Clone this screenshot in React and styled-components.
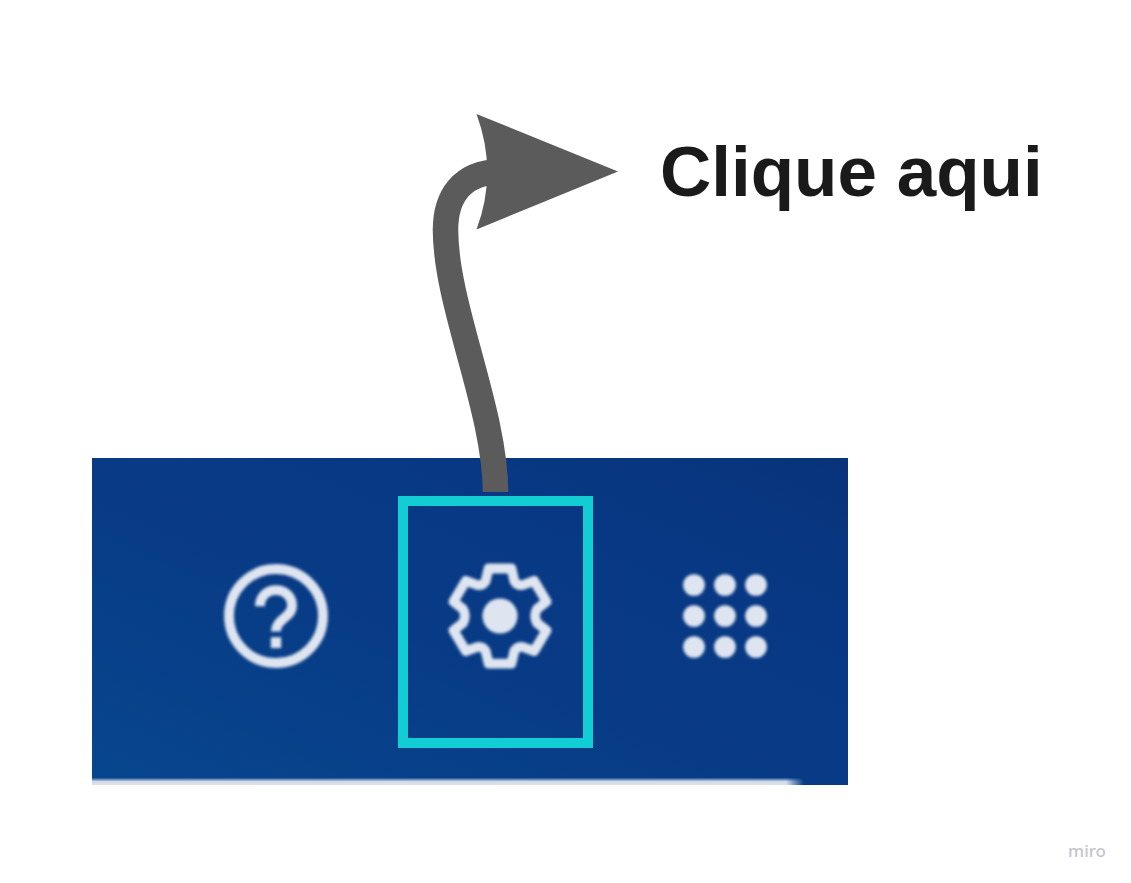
import React from 'react';
import styled, { createGlobalStyle } from 'styled-components';

const GlobalStyle = createGlobalStyle`
  *, *::before, *::after { box-sizing: border-box; }
  body {
    margin: 0;
    background: #ffffff;
    font-family: "Liberation Sans", Arial, sans-serif;
  }
`;

const Board = styled.main`
  display: flex;
  flex-direction: column;
  min-height: 100vh;
`;

const Callout = styled.h1`
  margin: 0;
  padding: 132px 0 246px 660px;
  font-size: 71px;
  line-height: 80px;
  font-weight: 700;
  color: #1a1a1a;
  white-space: nowrap;
`;

const Toolbar = styled.nav`
  display: flex;
  flex-direction: column;
  margin: 0 283px 0 92px;
  background: linear-gradient(to top right, #07468e 0%, #083b86 45%, #083883 75%, #08337b 100%);
`;

const Actions = styled.div`
  display: flex;
  align-items: flex-start;
  gap: 60px;
  padding: 38px 0 30px 122px;
`;

const IconButton = styled.button`
  display: block;
  flex: none;
  position: relative;
  margin: ${(p) => (p.$highlighted ? '0 10px 0 0' : '0')};
  padding: ${(p) => (p.$highlighted ? '48px 21px 60px 30px' : '58px 0 0')};
  border: ${(p) => (p.$highlighted ? '10px solid #12cdd4' : '0')};
  background: none;
  color: #dfe5f0;
  cursor: pointer;
`;

const Icon = styled.svg`
  display: block;
  width: 124px;
  height: 124px;
  filter: blur(1.5px);
`;

const Arrow = styled.svg`
  position: absolute;
  left: 20px;
  bottom: calc(100% + 14px);
  width: 192px;
  height: 382px;
  pointer-events: none;
`;

const PageEdge = styled.div`
  height: 7px;
  margin-right: 44px;
  background: linear-gradient(to bottom, #1f4f95 0%, #cfd9e8 50%, #dce3ee 100%);
  mask-image: linear-gradient(to left, transparent 0, #000 18px);
`;

const Footer = styled.footer`
  display: flex;
  justify-content: flex-end;
  margin-top: auto;
  padding: 0 25px 20px 0;
`;

const Brand = styled.a`
  font-family: "Noto Sans", sans-serif;
  font-size: 17px;
  line-height: 24px;
  font-weight: 500;
  color: #c5c5d0;
  text-decoration: none;
`;

const HelpIcon = () => (
  <Icon viewBox="0 0 24 24" fill="none" stroke="currentColor" strokeWidth="1.9" aria-hidden="true">
    <circle cx="12" cy="12" r="9.1" />
    <path d="M8.9 10.1C8.9 8.2 10.2 7 12 7s3.1 1.3 3.1 3c0 2.3-3.1 2.5-3.1 5" />
    <path d="M11 16.1h2v2.1h-2z" fill="currentColor" stroke="none" />
  </Icon>
);

const GearIcon = () => (
  <Icon viewBox="-12 -12 24 24" aria-hidden="true">
    <path
      d="M-2.2-9.2H2.2L2.8-6.7Q3.400-5.800 4.400-6L6.600-6.800 9-2.800 7.200-1.400Q6.400 0 7.200 1.400L9 2.800 6.600 6.800 4.400 6Q3.400 5.800 2.800 6.700L2.200 9.200H-2.200L-2.800 6.700Q-3.400 5.800-4.400 6L-6.600 6.800-9 2.800-7.200 1.400Q-6.400 0-7.200-1.400L-9-2.800-6.600-6.800-4.400-6Q-3.400-5.800-2.800-6.700Z"
      fill="none"
      stroke="currentColor"
      strokeWidth="1.9"
      strokeLinejoin="round"
    />
    <circle r="3.400" fill="currentColor" />
  </Icon>
);

const AppsIcon = () => (
  <Icon viewBox="0 0 24 24" fill="currentColor" aria-hidden="true">
    {[6, 12, 18].map((cy) =>
      [6, 12, 18].map((cx) => <circle key={`${cx}-${cy}`} cx={cx} cy={cy} r="2.1" />)
    )}
  </Icon>
);

const PointerArrow = () => (
  <Arrow viewBox="428 110 192 382" aria-hidden="true">
    <path
      d="M495.500 492C495.500 410 445.500 305 445.500 230C445.500 198 461 172 500 172"
      fill="none"
      stroke="#5b5b5b"
      strokeWidth="25.500"
    />
    <path d="M476.500 114L618 171.500 476.500 229.500Q498 172 476.500 114Z" fill="#5b5b5b" />
  </Arrow>
);

export default function App() {
  return (
    <>
      <GlobalStyle />
      <Board>
        <Callout>Clique aqui</Callout>
        <Toolbar>
          <Actions>
            <IconButton type="button" aria-label="Ajuda">
              <HelpIcon />
            </IconButton>
            <IconButton type="button" aria-label="Configurações" $highlighted>
              <GearIcon />
              <PointerArrow />
            </IconButton>
            <IconButton type="button" aria-label="Aplicativos">
              <AppsIcon />
            </IconButton>
          </Actions>
          <PageEdge />
        </Toolbar>
        <Footer>
          <Brand href="#">miro</Brand>
        </Footer>
      </Board>
    </>
  );
}
